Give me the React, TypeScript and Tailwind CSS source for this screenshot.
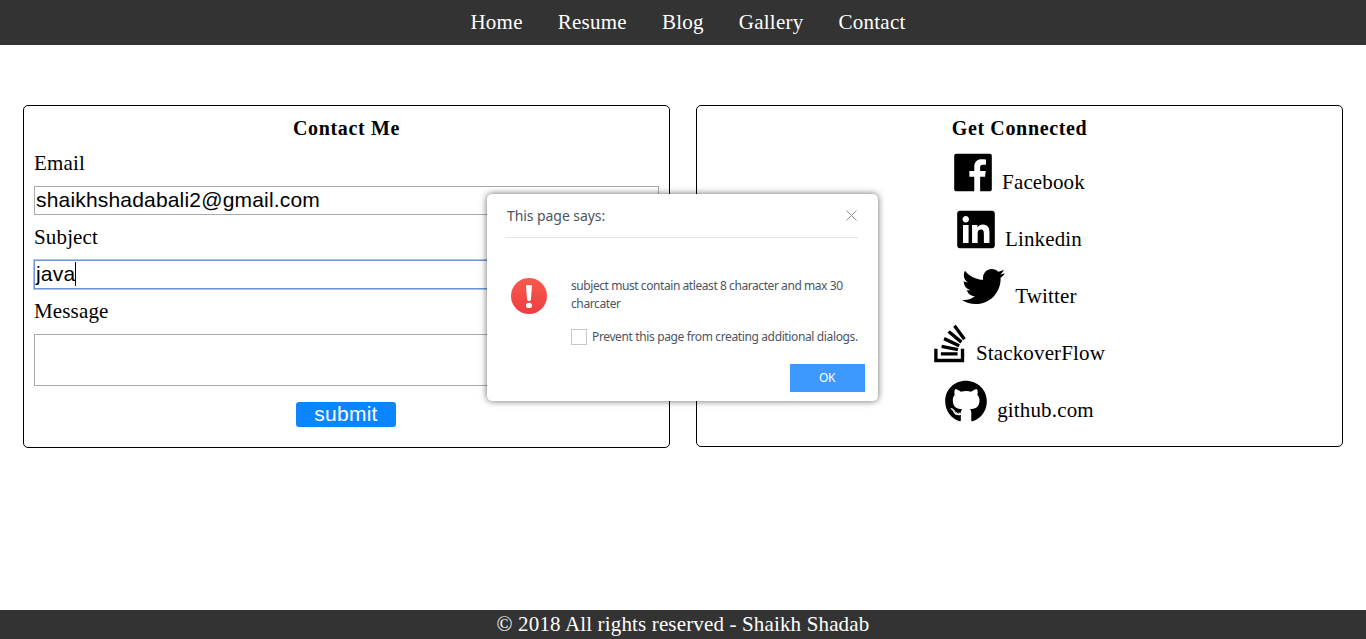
import React from "react";
import { FaGithub, FaLinkedin, FaStackOverflow, FaTwitter } from "react-icons/fa";

const FacebookIcon = () => (
  <svg viewBox="0 0 448 512" className="h-[43px] w-[38px] shrink-0" fill="currentColor">
    <path d="M448 56.7v398.5c0 13.7-11.1 24.7-24.7 24.7H309.1V306.5h58.2l8.7-67.6h-67v-43.2c0-19.6 5.4-32.9 33.5-32.9h35.8v-60.5c-6.2-.8-27.4-2.7-52.2-2.7-51.6 0-87 31.5-87 89.4v49.9h-58.4v67.6h58.4V480H24.7C11.1 480 0 468.9 0 455.3V56.7C0 43.1 11.1 32 24.7 32h398.5c13.7 0 24.8 11.1 24.8 24.7z" />
  </svg>
);

const links = [
  { label: "Facebook", icon: <FacebookIcon /> },
  { label: "Linkedin", icon: <FaLinkedin className="h-[43px] w-[38px] shrink-0" /> },
  { label: "Twitter", icon: <FaTwitter className="h-[43px] w-[43px] shrink-0" /> },
  { label: "StackoverFlow", icon: <FaStackOverflow className="h-[43px] w-[32px] shrink-0" /> },
  { label: "github.com", icon: <FaGithub className="mt-[0.5px] h-[43px] w-[42px] shrink-0" /> },
];

function Dialog() {
  return (
    <div className="absolute left-[487px] top-[194px] flex h-[207px] w-[391px] flex-col rounded-[5px] bg-white font-['Noto_Sans',sans-serif] tracking-normal text-[#4c5561] shadow-[0_0_7px_rgba(0,0,0,0.6)]">
      <div className="ml-[18px] mr-5 flex h-[44px] items-center justify-between border-b border-[#e6e6e6] pl-[2px]">
        <span className="text-[14px] leading-5 tracking-[-0.07px]">This page says:</span>
        <svg className="mr-px h-[11px] w-[11px]" viewBox="0 0 11 11" stroke="#8b9096" fill="none">
          <path d="M.5.5l10 10M10.5.5l-10 10" />
        </svg>
      </div>
      <div className="mt-[39px] flex pl-6">
        <svg className="mt-px h-9 w-9 shrink-0" viewBox="0 0 36 36">
          <defs>
            <linearGradient id="alert" x1="0" y1="0" x2="0" y2="1">
              <stop offset="0" stopColor="#f85a4e" />
              <stop offset="1" stopColor="#ee3d3f" />
            </linearGradient>
          </defs>
          <circle cx="18" cy="18" r="18" fill="url(#alert)" />
          <path d="M15 8q0-1 1-1h4q1 0 1 1l-1.1 13.5q-.2 1.5-1.9 1.5t-1.9-1.5z" fill="#fff" />
          <ellipse cx="18" cy="27.4" rx="3" ry="2.7" fill="#fff" />
        </svg>
        <div className="ml-6 text-[12px] leading-[18px]">
          <p className="whitespace-nowrap tracking-[-0.43px]">subject must contain atleast 8 character and max 30</p>
          <p className="tracking-[-0.4px]">charcater</p>
          <div className="mt-[15px] flex items-center">
            <span className="mr-[5px] h-4 w-4 shrink-0 border border-[#c9c9c9]" />
            <span className="whitespace-nowrap tracking-[-0.37px]">Prevent this page from creating additional dialogs.</span>
          </div>
        </div>
      </div>
      <button className="ml-[303px] mt-[18px] flex h-7 w-[75px] items-center justify-center bg-[#3e99ff] pr-px text-[12px] tracking-[-0.3px] text-white">OK</button>
    </div>
  );
}

export default function App() {
  return (
    <div className="relative flex h-[639px] flex-col overflow-hidden bg-white font-['Liberation_Serif',serif] text-[21px] leading-6 tracking-[0.15px] text-black">
      <nav className="flex h-[45px] shrink-0 justify-center gap-[35px] bg-[#333] pl-[10px] pt-[10px] tracking-[0.25px] text-white">
        <a>Home</a>
        <a>Resume</a>
        <a>Blog</a>
        <a>Gallery</a>
        <a>Contact</a>
      </nav>
      <main className="flex grow items-start gap-[26px] px-[23px] pt-[60px]">
        <section className="flex h-[343px] w-[647px] flex-col rounded-[5px] border border-black px-[10px] pt-[10px]">
          <h2 className="text-center text-[20px] font-bold leading-6 tracking-[0.65px]">Contact Me</h2>
          <label className="mt-[11px]">Email</label>
          <div className="mt-[11px] h-[29px] border border-[#a9a9a9] pl-px pt-px font-['Liberation_Sans',sans-serif] tracking-[0.18px]">shaikhshadabali2@gmail.com</div>
          <label className="mt-[10px]">Subject</label>
          <div className="mt-[11px] flex h-[29px] border border-[#6f93d8] pl-px pt-px font-['Liberation_Sans',sans-serif] tracking-[0.18px] shadow-[0_0_0_1px_#a9c2ee]">
            java<span className="h-6 w-px bg-black" />
          </div>
          <label className="mt-[10px]">Message</label>
          <div className="mt-[11px] h-[52px] border border-[#a9a9a9]" />
          <button className="mr-px mt-4 flex h-[25px] w-[100px] justify-center self-center rounded-[3px] bg-[#0a84ff] font-['Liberation_Sans',sans-serif] tracking-[0.25px] text-white">submit</button>
        </section>
        <section className="h-[342px] w-[647px] rounded-[5px] border border-black pt-[10px]">
          <h2 className="text-center text-[20px] font-bold leading-6 tracking-[0.65px]">Get Connected</h2>
          <div className="mt-[11px] flex flex-col gap-[14px]">
            {links.map((l) => (
              <div key={l.label} className="flex h-[43px] justify-center gap-[10px]">
                {l.icon}
                <span className="pt-[19px]">{l.label}</span>
              </div>
            ))}
          </div>
        </section>
      </main>
      <footer className="h-[29px] shrink-0 bg-[#333] pt-[2px] text-center text-white">© 2018 All rights reserved - Shaikh Shadab</footer>
      <Dialog />
    </div>
  );
}
